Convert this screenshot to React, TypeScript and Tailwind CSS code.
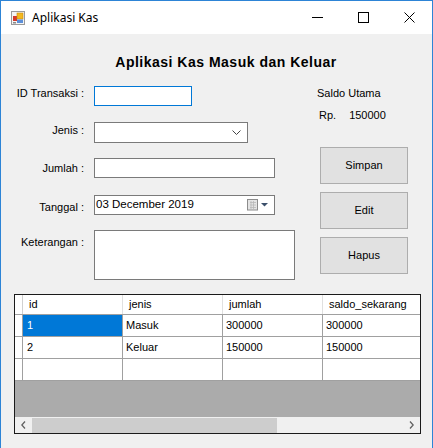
import React from 'react';

const rows = [
    { id: '1', jenis: 'Masuk', jumlah: '300000', saldo: '300000' },
    { id: '2', jenis: 'Keluar', jumlah: '150000', saldo: '150000' },
];

function AppIcon() {
    return (
        <svg width="15" height="15" viewBox="0 0 15 15">
            <rect x="0.5" y="0.5" width="13" height="13" fill="#f4f4f4" stroke="#9a9a9a" />
            <rect x="2" y="5" width="4" height="5" fill="#d33a2c" />
            <rect x="6" y="2" width="6" height="6" fill="#f3b81f" stroke="#c98a0a" strokeWidth="0.6" />
            <rect x="6" y="8.5" width="6" height="3.5" fill="#5d8fd8" />
            <rect x="2" y="11" width="3" height="1.5" fill="#8a8a8a" />
        </svg>
    );
}

export default function App() {
    return (
        <div className="w-[433px] h-[448px] flex flex-col bg-[#f0f0f0] border-x border-t border-[#2d84d6] overflow-hidden font-['Liberation_Sans',Arial,sans-serif] text-[11px] text-black">
            {/* Title bar */}
            <div className="h-[33px] bg-white flex items-center shrink-0">
                <div className="ml-[10px] mt-[2px]">
                    <AppIcon />
                </div>
                <span className="ml-[6px] text-[12px] font-['Noto_Sans',sans-serif] text-black">Aplikasi Kas</span>
                <div className="ml-auto flex items-center h-full">
                    <div className="w-[46px] h-full flex items-center justify-center">
                        <svg width="11" height="2" viewBox="0 0 11 2"><rect width="11" height="1" fill="#000" /></svg>
                    </div>
                    <div className="w-[46px] h-full flex items-center justify-center">
                        <svg width="11" height="11" viewBox="0 0 11 11"><rect x="0.5" y="0.5" width="10" height="10" fill="none" stroke="#000" /></svg>
                    </div>
                    <div className="w-[46px] h-full flex items-center justify-center">
                        <svg width="11" height="11" viewBox="0 0 11 11"><path d="M0.5 0.5 L10.5 10.5 M10.5 0.5 L0.5 10.5" stroke="#000" strokeWidth="1" /></svg>
                    </div>
                </div>
            </div>

            {/* Body */}
            <div className="flex flex-col">
                <div className="h-[20px] mt-[18px] flex justify-center pl-[19px]">
                    <span className="text-[14px] font-bold leading-[20px] tracking-[0.5px]">Aplikasi Kas Masuk dan Keluar</span>
                </div>

                <div className="flex mt-[14px]">
                    {/* Form */}
                    <div className="flex flex-col w-[295px]">
                        <div className="flex items-center h-[20px]">
                            <span className="w-[83px] text-right -mt-[5px]">ID Transaksi :</span>
                            <div className="ml-[10px] w-[98px] h-[20px] bg-white border border-[#0078d7]" />
                        </div>
                        <div className="flex items-center h-[21px] mt-[16px]">
                            <span className="w-[83px] text-right -mt-[5px]">Jenis :</span>
                            <div className="ml-[10px] w-[154px] h-[21px] bg-white border border-[#7a7a7a] flex items-center justify-end pr-[6px]">
                                <svg width="9" height="5" viewBox="0 0 9 5"><path d="M0.5 0.5 L4.5 4.5 L8.5 0.5" fill="none" stroke="#444" strokeWidth="1" /></svg>
                            </div>
                        </div>
                        <div className="flex items-center h-[20px] mt-[15px]">
                            <span className="w-[83px] text-right">Jumlah :</span>
                            <div className="ml-[10px] w-[181px] h-[20px] bg-white border border-[#7a7a7a]" />
                        </div>
                        <div className="flex items-center h-[20px] mt-[17px]">
                            <span className="w-[83px] text-right mt-[4px]">Tanggal :</span>
                            <div className="ml-[10px] w-[181px] h-[20px] bg-white border border-[#7a7a7a] flex items-center pl-[1px] pr-[6px]">
                                <span className="text-[11.5px] text-black">03 December 2019</span>
                                <svg className="ml-auto" width="21" height="12" viewBox="0 0 21 12">
                                    <rect x="0.5" y="0.5" width="10" height="10.5" fill="#e4e4e4" stroke="#8c8c8c" />
                                    <path d="M3 3.5 H9 M3 6 H9 M3 8.5 H9 M4 2 V10 M6.5 2 V10" stroke="#b8b8b8" strokeWidth="0.8" />
                                    <path d="M14 4 L21 4 L17.5 7.5 Z" fill="#3b4f6b" />
                                </svg>
                            </div>
                        </div>
                        <div className="flex items-start h-[50px] mt-[15px]">
                            <span className="w-[83px] text-right mt-[4px]">Keterangan :</span>
                            <div className="ml-[10px] w-[201px] h-[50px] bg-white border border-[#7a7a7a]" />
                        </div>
                    </div>

                    {/* Right side */}
                    <div className="flex flex-col ml-[21px]">
                        <span className="mt-[1px] leading-[13px]">Saldo Utama</span>
                        <div className="flex mt-[9px] ml-[2px] leading-[13px]">
                            <span>Rp.</span>
                            <span className="ml-[13px]">150000</span>
                        </div>
                        <div className="flex flex-col gap-[8px] mt-[25px] ml-[3px]">
                            <button className="w-[88px] h-[37px] bg-[#e1e1e1] border border-[#adadad] text-[11px]">Simpan</button>
                            <button className="w-[88px] h-[37px] bg-[#e1e1e1] border border-[#adadad] text-[11px]">Edit</button>
                            <button className="w-[88px] h-[37px] bg-[#e1e1e1] border border-[#adadad] text-[11px]">Hapus</button>
                        </div>
                    </div>
                </div>

                {/* Data grid */}
                <div className="mt-[14px] ml-[13px] w-[407px] h-[140px] border border-[#1a1a1a] bg-[#ababab] flex flex-col overflow-hidden">
                    <div className="flex h-[20px] bg-white border-b border-[#a0a0a0] shrink-0">
                        <div className="w-[8px] shrink-0 border-r border-[#d0d0d0]" />
                        {['id', 'jenis', 'jumlah', 'saldo_sekarang'].map((h) => (
                            <div key={h} className="w-[100px] shrink-0 border-r border-[#e0e0e0] pl-[6px] leading-[19px]">{h}</div>
                        ))}
                    </div>
                    {rows.map((r, i) => (
                        <div key={r.id} className="flex h-[22px] bg-white border-b border-[#a0a0a0] shrink-0">
                            <div className="w-[8px] shrink-0 border-r border-[#a0a0a0] bg-white" />
                            <div className={`w-[100px] shrink-0 border-r border-[#a0a0a0] pl-[4px] leading-[21px] ${i === 0 ? 'bg-[#0078d7] text-white' : ''}`}>{r.id}</div>
                            <div className="w-[100px] shrink-0 border-r border-[#a0a0a0] pl-[3px] leading-[21px]">{r.jenis}</div>
                            <div className="w-[100px] shrink-0 border-r border-[#a0a0a0] pl-[3px] leading-[21px]">{r.jumlah}</div>
                            <div className="w-[100px] shrink-0 pl-[3px] leading-[21px]">{r.saldo}</div>
                        </div>
                    ))}
                    <div className="flex h-[22px] bg-white border-b border-[#a0a0a0] shrink-0">
                        <div className="w-[8px] shrink-0 border-r border-[#a0a0a0]" />
                        <div className="w-[100px] shrink-0 border-r border-[#a0a0a0]" />
                        <div className="w-[100px] shrink-0 border-r border-[#a0a0a0]" />
                        <div className="w-[100px] shrink-0 border-r border-[#a0a0a0]" />
                        <div className="w-[100px] shrink-0" />
                    </div>
                    <div className="flex-1" />
                    <div className="h-[16px] bg-[#f0f0f0] flex items-center shrink-0">
                        <div className="w-[17px] flex justify-center">
                            <svg width="5" height="8" viewBox="0 0 5 8"><path d="M4 0.5 L0.8 4 L4 7.5" fill="none" stroke="#606060" strokeWidth="1.3" /></svg>
                        </div>
                        <div className="w-[245px] h-[15px] bg-[#cdcdcd]" />
                        <div className="ml-auto w-[17px] flex justify-center">
                            <svg width="5" height="8" viewBox="0 0 5 8"><path d="M1 0.5 L4.2 4 L1 7.5" fill="none" stroke="#606060" strokeWidth="1.3" /></svg>
                        </div>
                    </div>
                </div>
            </div>
        </div>
    );
}
